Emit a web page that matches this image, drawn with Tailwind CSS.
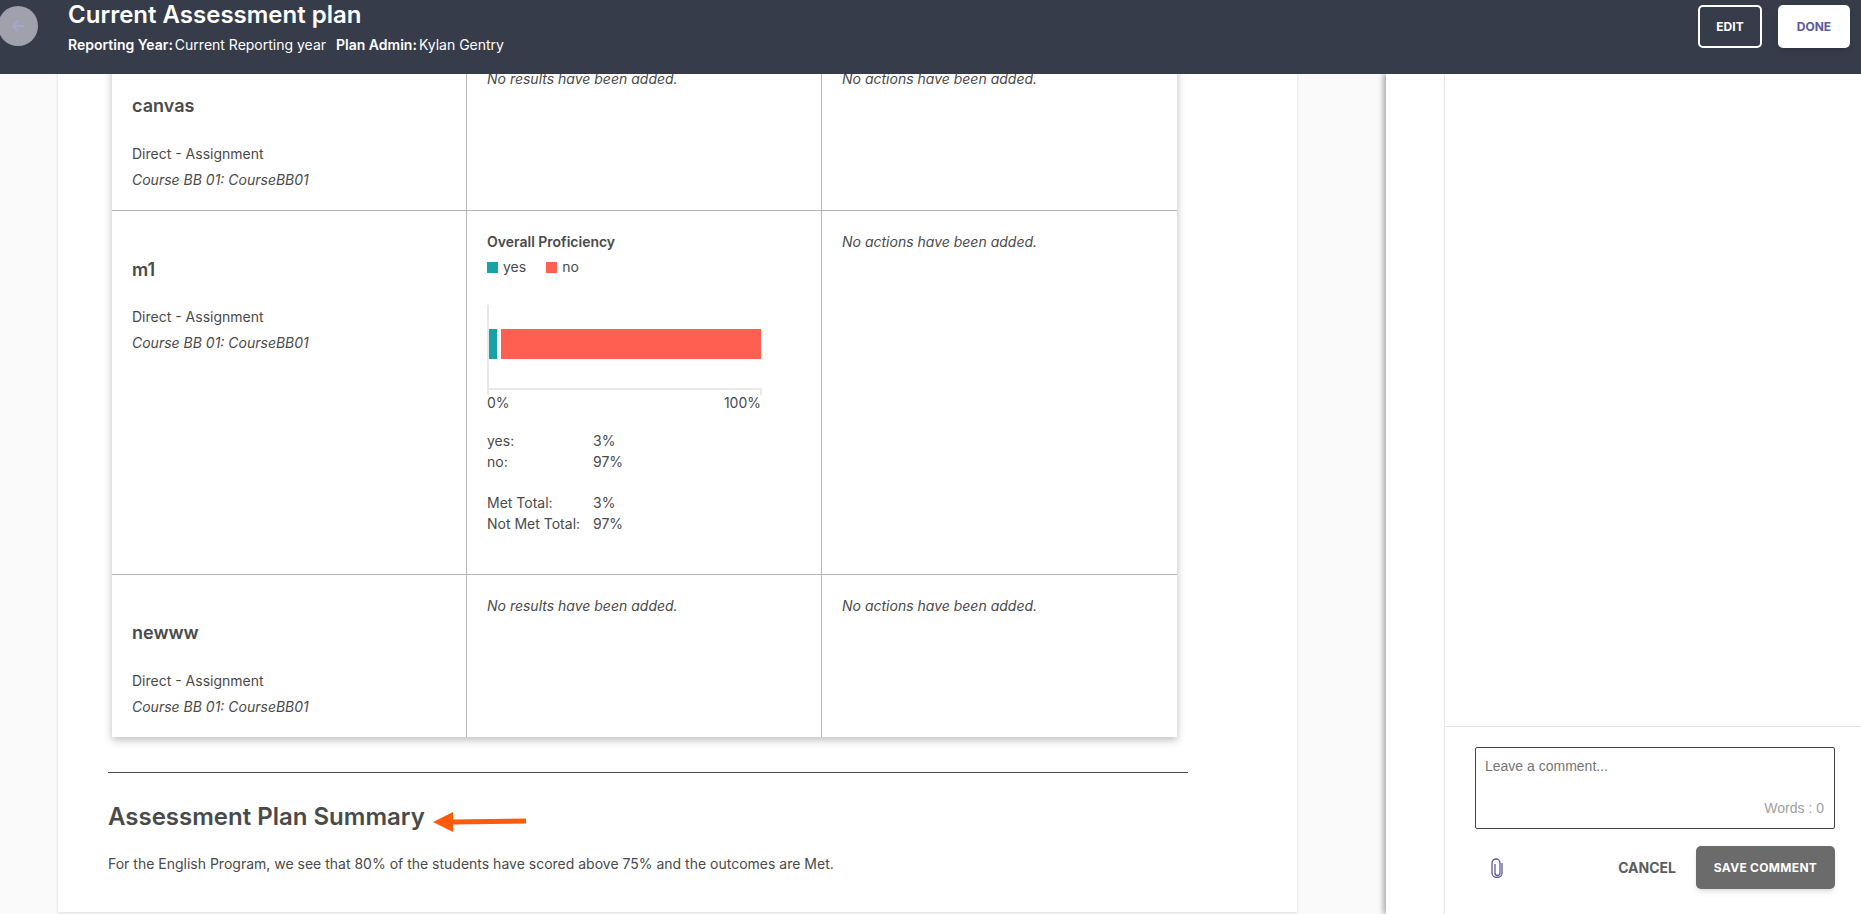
<!DOCTYPE html>
<html lang="en">
<head>
    <meta charset="UTF-8">
    <meta name="viewport" content="width=device-width, initial-scale=1.0">
    <title>Current Assessment plan</title>
    <script src="https://cdn.jsdelivr.net/npm/@tailwindcss/browser@4"></script>
</head>
<body class="h-screen overflow-hidden flex flex-col bg-[#fafafa] font-['Inter',sans-serif] text-[#4a4a4a]">
    <!-- header -->
    <header class="relative z-20 h-[74px] shrink-0 bg-[#373c4a] flex items-start justify-between text-white">
        <div class="flex items-start">
            <div class="w-[40px] h-[40px] ml-[-2px] mt-[6px] rounded-full bg-[#a0a1ac] flex items-center justify-center">
                <svg class="w-[14px] h-[14px] text-[#a8a8d0]" viewBox="0 0 14 14" fill="none" stroke="currentColor" stroke-width="1.5"><path d="M13 7H2M7 2L2 7l5 5"/></svg>
            </div>
            <div class="ml-[30px]">
                <h1 class="text-2xl leading-[30px] font-semibold">Current Assessment plan</h1>
                <p class="mt-[5px] text-sm leading-5 flex">
                    <b class="font-semibold mr-[2px]">Reporting Year:</b><span class="mr-[10px]">Current Reporting year</span>
                    <b class="font-semibold mr-[2px]">Plan Admin:</b><span>Kylan Gentry</span>
                </p>
            </div>
        </div>
        <div class="flex gap-4 mt-[5px] mr-[11px]">
            <button class="w-16 h-[43px] border-2 border-white rounded-[5px] text-xs font-bold">EDIT</button>
            <button class="w-[72px] h-[43px] bg-white rounded-[5px] text-xs font-bold text-[#5d5a9f] shadow-md">DONE</button>
        </div>
    </header>

    <div class="flex flex-1 min-h-0">
        <!-- main column -->
        <main class="w-[1386px] shrink-0 overflow-hidden">
            <div class="ml-[58px] w-[1239px] h-[864px] bg-white shadow-[0_1px_3px_rgba(0,0,0,0.12)] -mt-[26px]">
                <div class="ml-[54px] w-[1065px] shadow-[0_3px_8px_rgba(50,50,70,0.32)] grid grid-cols-[355px_355px_1fr] text-sm">
                    <!-- canvas row -->
                    <div class="h-[163px] border-r border-b border-[#b6b6b6] pl-5 pt-[46px]">
                        <h3 class="text-lg leading-6 font-semibold">canvas</h3>
                        <p class="mt-[26px] leading-5">Direct - Assignment</p>
                        <p class="mt-[6px] leading-5 italic">Course BB 01: CourseBB01</p>
                    </div>
                    <div class="border-r border-b border-[#b6b6b6] pl-5 pt-[21px] italic leading-5">No results have been added.</div>
                    <div class="border-b border-[#b6b6b6] pl-5 pt-[21px] italic leading-5">No actions have been added.</div>

                    <!-- m1 row -->
                    <div class="h-[364px] border-r border-b border-[#b6b6b6] pl-5 pt-[47px]">
                        <h3 class="text-lg leading-6 font-semibold">m1</h3>
                        <p class="mt-[25px] leading-5">Direct - Assignment</p>
                        <p class="mt-[6px] leading-5 italic">Course BB 01: CourseBB01</p>
                    </div>
                    <div class="border-r border-b border-[#b6b6b6] pl-5 pt-[21px] leading-5">
                        <p class="font-semibold">Overall Proficiency</p>
                        <div class="flex items-center mt-[5px] h-5">
                            <span class="w-[11px] h-[11px] bg-[#17a2a8]"></span><span class="ml-[5px] mr-[20px]">yes</span>
                            <span class="w-[11px] h-[11px] bg-[#ff5f50]"></span><span class="ml-[5px]">no</span>
                        </div>
                        <!-- chart -->
                        <div class="relative mt-[28px] w-[275px] h-[85px] border-l-2 border-b-2 border-[#e8e8e8]">
                            <div class="absolute left-0 top-[24px] h-[30px] w-[8px] bg-[#17a2a8]"></div>
                            <div class="absolute left-[12px] top-[24px] h-[30px] w-[260px] bg-[#ff5f50]"></div>
                            <div class="absolute right-0 bottom-[-7px] w-[2px] h-[7px] bg-[#e8e8e8]"></div>
                            <div class="absolute left-[-2px] bottom-[-7px] w-[2px] h-[7px] bg-[#e8e8e8]"></div>
                        </div>
                        <div class="flex justify-between w-[274px] mt-[3px] text-[14px]"><span>0%</span><span>100%</span></div>
                        <div class="mt-[17px] grid grid-cols-[106px_1fr] leading-[21px]">
                            <span>yes:</span><span>3%</span>
                            <span>no:</span><span>97%</span>
                            <span class="mt-[20px]">Met Total:</span><span class="mt-[20px]">3%</span>
                            <span>Not Met Total:</span><span>97%</span>
                        </div>
                    </div>
                    <div class="border-b border-[#b6b6b6] pl-5 pt-[21px] italic leading-5">No actions have been added.</div>

                    <!-- newww row -->
                    <div class="h-[162px] border-r border-[#b6b6b6] pl-5 pt-[46px]">
                        <h3 class="text-lg leading-6 font-semibold">newww</h3>
                        <p class="mt-[26px] leading-5">Direct - Assignment</p>
                        <p class="mt-[6px] leading-5 italic">Course BB 01: CourseBB01</p>
                    </div>
                    <div class="border-r border-[#b6b6b6] pl-5 pt-[21px] italic leading-5">No results have been added.</div>
                    <div class="pl-5 pt-[21px] italic leading-5">No actions have been added.</div>
                </div>

                <hr class="ml-[50px] w-[1080px] mt-[35px] border-t border-[#4a4a4a]">

                <div class="ml-[50px] mt-[28px] flex items-center">
                    <h2 class="text-2xl leading-8 font-semibold">Assessment Plan Summary</h2>
                    <svg class="ml-[8px] mt-[10px]" width="94" height="20" viewBox="0 0 94 20"><path d="M0 10L20 0v7.5l73-1v5L20 12.500v7.500z" fill="#ff5a0a"/></svg>
                </div>
                <p class="ml-[50px] mt-[21px] text-sm leading-5">For the English Program, we see that 80% of the students have scored above 75% and the outcomes are Met.</p>
            </div>
        </main>

        <!-- comments panel -->
        <aside class="flex-1 relative z-10 bg-white shadow-[-3px_0_5px_rgba(0,0,0,0.3)] pl-[58px]">
            <div class="h-full border-l border-[#e5e5e5] flex flex-col justify-end">
                <div class="h-[188px] border-t border-[#e5e5e5] pl-[30px] pr-[26px] pt-[20px]">
                    <div class="relative h-[82px] border border-[#444] rounded-[2px] px-[9px] py-[8px] font-['Liberation_Sans',sans-serif] text-sm">
                        <span class="text-[#757575]">Leave a comment...</span>
                        <span class="absolute right-[10px] bottom-[10px] text-[#a0a0a0]">Words : 0</span>
                    </div>
                    <div class="flex items-center mt-[17px]">
                        <svg class="ml-[16px] text-[#5d5a9f]" width="12" height="20" viewBox="0 0 12 20" fill="none" stroke="currentColor" stroke-width="1.3"><path d="M11 5v10a5 4.500 0 0 1-10 0V5a4 4 0 0 1 8 0v10a2.500 2.500 0 0 1-5 0V6"/></svg>
                        <button class="ml-auto text-sm font-bold text-[#5c5c5c]">CANCEL</button>
                        <button class="ml-[20px] w-[139px] h-[43px] bg-[#6b6b6b] rounded-[5px] text-xs font-bold tracking-[0.3px] text-white shadow-md">SAVE COMMENT</button>
                    </div>
                </div>
            </div>
        </aside>
    </div>
</body>
</html>
